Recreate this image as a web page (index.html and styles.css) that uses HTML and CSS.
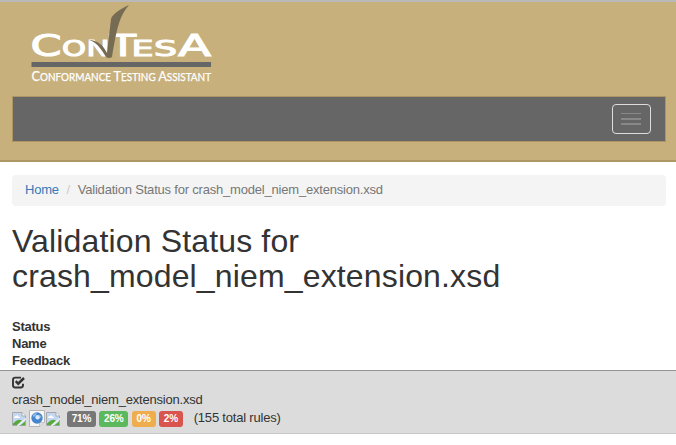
FILE: index.html
```html
<!DOCTYPE html>
<html lang="en">
<head>
<meta charset="utf-8">
<title>Validation Status</title>
<link rel="stylesheet" href="styles.css">
</head>
<body>
<header class="site-header">
  <svg class="logo" width="190" height="84" viewBox="26 4 190 84">
    <g class="wordmark">
      <text x="30.5" y="56" font-size="30" textLength="31" lengthAdjust="spacingAndGlyphs">C</text>
      <text x="62" y="56" font-size="21" textLength="24" lengthAdjust="spacingAndGlyphs">O</text>
      <text x="86.5" y="56" font-size="21" textLength="23" lengthAdjust="spacingAndGlyphs">N</text>
      <text x="110" y="56" font-size="30" textLength="26" lengthAdjust="spacingAndGlyphs">T</text>
      <text x="131.5" y="56" font-size="21" textLength="22" lengthAdjust="spacingAndGlyphs">E</text>
      <text x="154" y="56" font-size="21" textLength="23" lengthAdjust="spacingAndGlyphs">S</text>
      <text x="178" y="56" font-size="30" textLength="33" lengthAdjust="spacingAndGlyphs">A</text>
    </g>
    <path class="check" d="M89 40C97 40 103 45 107 53L111 19C112 14 122 8 129 5C119 17 117 28 112 57Q109 59 106 57C101 49 97 42 89 40Z"/>
    <rect class="rule" x="31.5" y="62" width="179.5" height="5"/>
    <text class="tagline" x="31.5" y="80.5" textLength="179.5" lengthAdjust="spacingAndGlyphs"><tspan class="cap">C</tspan>ONFORMANCE <tspan class="cap">T</tspan>ESTING <tspan class="cap">A</tspan>SSISTANT</text>
  </svg>
  <nav class="navbar">
    <button class="toggle" aria-label="Menu"><i></i><i></i><i></i></button>
  </nav>
</header>
<main class="content">
  <div class="breadcrumb"><a>Home</a><span class="sep">/</span><span>Validation Status for crash_model_niem_extension.xsd</span></div>
  <h1>Validation Status for crash_model_niem_extension.xsd</h1>
  <div class="columns"><div>Status</div><div>Name</div><div>Feedback</div></div>
</main>
<section class="result">
  <div class="state">
    <svg width="13" height="13" viewBox="0 0 13 13"><path d="M9 1.6H3.2Q1 1.6 1 3.8V9.3Q1 11.5 3.2 11.5H8.8Q11 11.5 11 9.3V7.8" fill="none" stroke="#333" stroke-width="1.9"/><path d="M3.7 5.2L6.2 7.7L12 2" fill="none" stroke="#333" stroke-width="2.5"/></svg>
  </div>
  <div class="name">crash_model_niem_extension.xsd</div>
  <div class="feedback">
    <svg class="icons" width="52" height="20" viewBox="0 0 52 20">
      <defs>
        <g id="broken">
          <path d="M.5 .5H10L13.5 4V13.5H.5Z" fill="#c3d6f2" stroke="#a5a9ae"/>
          <path d="M10 .5V4H13.5" fill="#fff" stroke="#a5a9ae"/>
          <path d="M2 6Q2 4 4 4Q5.5 2.5 6.5 4.5Q8 4.5 8 6Z" fill="#fff"/>
          <path d="M1 13V11.5Q6 6 10 8.5L5 13Z" fill="#57aa3a"/>
          <path d="M8.5 13.2H13V9.5Z" fill="#57aa3a"/>
          <path d="M5.5 14L14 6.5" stroke="#f0f0f0" stroke-width="1.6"/>
        </g>
      </defs>
      <use href="#broken" x="0" y="3"/>
      <path d="M17.5 1.5H32.5V13L27.5 17.5H17.5Z" fill="#f7f7f7" stroke="#b5b5b5"/>
      <path d="M27.5 17.5V13.5H32.5" fill="#ddd" stroke="#bbb" stroke-width=".7"/>
      <circle cx="25" cy="9" r="5.7" fill="#4685cb"/>
      <path d="M20.5 7Q22 4 25 4L24 6L22 8ZM27 5L29.5 8L28 9Z" fill="#90bcea"/>
      <circle cx="25.6" cy="8.3" r="2.2" fill="#d9ebff"/>
      <use href="#broken" x="34" y="3"/>
    </svg>
    <span class="badge wide gray">71%</span><span class="badge wide green">26%</span><span class="badge orange">0%</span><span class="badge red">2%</span>
    <span class="total">(155 total rules)</span>
  </div>
</section>
</body>
</html>
```
FILE: styles.css
```css
* { box-sizing: border-box; }
body { margin: 0; background: #fff; color: #333; font: 13px/17px "Liberation Sans", Arial, sans-serif; letter-spacing: -.2px; }
.site-header { height: 162px; padding: 2px 10px 0 12px; background: #c7b07b; border-top: 2px solid #b9b9b9; border-bottom: 2px solid #ae9564; }
.logo { display: block; margin-left: 14px; letter-spacing: 0; }
.wordmark { fill: #fff; font-family: "DejaVu Sans", sans-serif; stroke: #fff; stroke-width: 1.1; }
.check { fill: #766b53; }
.rule { fill: #666; }
.tagline { fill: #fff; stroke: #fff; stroke-width: .25; font: 10.5px Lato, sans-serif; }
.cap { font-size: 13.5px; }
.navbar { display: flex; justify-content: flex-end; align-items: center; height: 46px; margin-top: 8px; padding-right: 14px; background: #666; border: 1px solid #ae9564; }
.toggle { display: flex; flex-direction: column; align-items: flex-start; justify-content: center; gap: 3px; width: 39px; height: 30px; padding: 0 8px; background: transparent; border: 1px solid #ddd; border-radius: 4px; }
.toggle i { width: 20px; height: 2px; background: #888; }
.toggle i:first-child { height: 1px; margin-bottom: 1px; }
.content { padding: 13px 10px 0 12px; }
.breadcrumb { height: 31px; padding: 6px 13px; background: #f4f4f4; border-radius: 4px; color: #777; }
.breadcrumb a { color: #337ab7; }
.sep { padding: 0 7.7px; color: #ccc; }
h1 { width: 560px; margin: 18px 0 24px; font-size: 32px; line-height: 35px; font-weight: 400; letter-spacing: .15px; }
.columns { height: 52px; font-weight: 700; letter-spacing: -.25px; }
.result { height: 64px; padding: 5px 12px 0; background: #dcdcdc; border-top: 1px solid #949494; border-bottom: 1px solid #c8c8c8; }
.state { height: 15px; }
.state svg { display: block; }
.feedback { display: flex; align-items: center; height: 20px; margin-top: 1px; }
.icons { margin-right: 3px; }
.badge { width: 24px; height: 16px; margin-right: 3.3px; border-radius: 3px; color: #fff; font-size: 10px; line-height: 16px; font-weight: 700; text-align: center; letter-spacing: -.1px; }
.wide { width: 29px; }
.gray { background: #777; }
.green { background: #5cb85c; }
.orange { background: #f0ad4e; }
.red { background: #d9534f; }
.total { margin: -4px 0 0 7.5px; }
```
